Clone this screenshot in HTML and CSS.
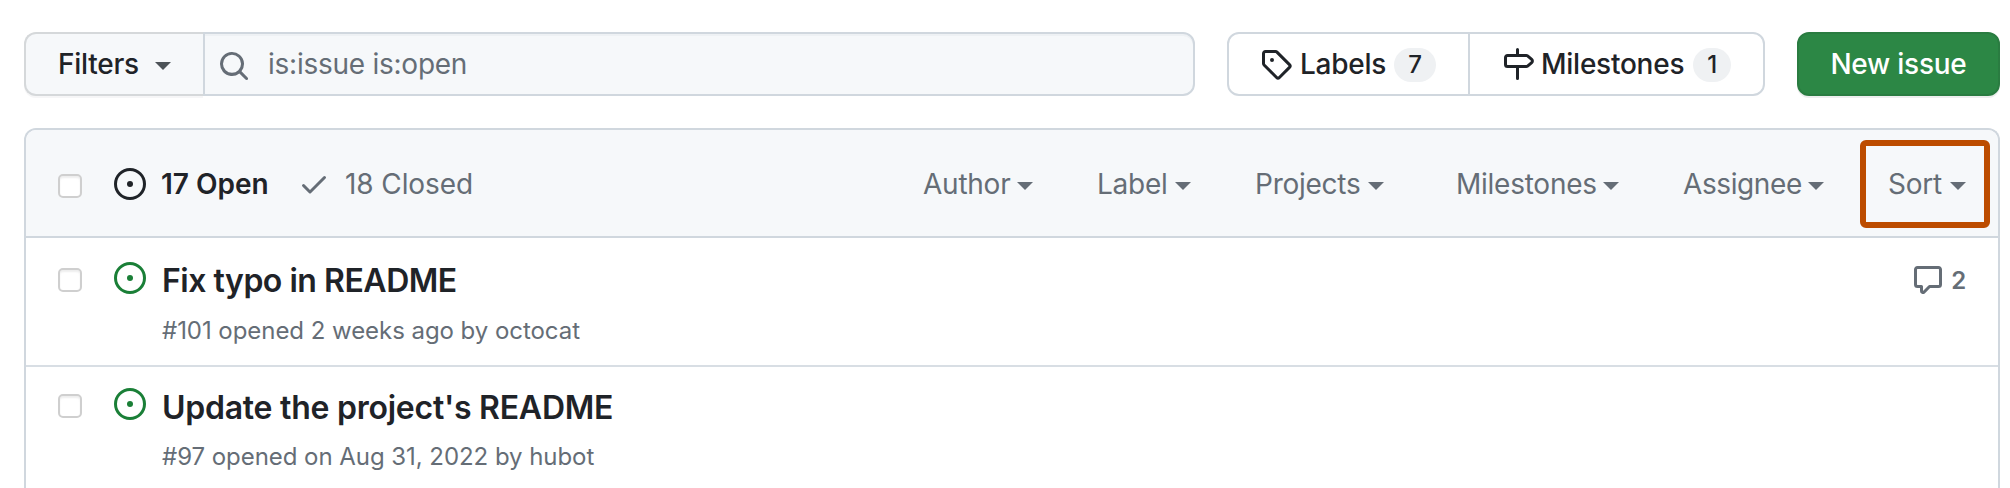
FILE: index.html
```html
<!DOCTYPE html>
<html lang="en">
<head>
<meta charset="utf-8">
<title>Issues</title>
<link rel="stylesheet" href="styles.css">
</head>
<body>
<svg class="sprite" aria-hidden="true">
  <symbol id="opened" viewBox="0 0 16 16"><path d="M8 9.5a1.5 1.5 0 1 0 0-3 1.5 1.5 0 0 0 0 3Z"/><path d="M8 0a8 8 0 1 1 0 16A8 8 0 0 1 8 0ZM1.5 8a6.5 6.5 0 1 0 13 0 6.5 6.5 0 0 0-13 0Z"/></symbol>
  <symbol id="check" viewBox="0 0 16 16"><path d="M13.78 4.22a.75.75 0 0 1 0 1.06l-7.25 7.25a.75.75 0 0 1-1.06 0L2.22 9.28a.751.751 0 0 1 .018-1.042.751.751 0 0 1 1.042-.018L6 10.94l6.72-6.72a.75.75 0 0 1 1.06 0Z"/></symbol>
  <symbol id="search" viewBox="0 0 16 16"><path d="M10.68 11.74a6 6 0 0 1-7.922-8.982 6 6 0 0 1 8.982 7.922l3.04 3.04a.749.749 0 0 1-.326 1.275.749.749 0 0 1-.734-.215ZM11.5 7a4.499 4.499 0 1 0-8.997 0A4.499 4.499 0 0 0 11.5 7Z"/></symbol>
  <symbol id="tag" viewBox="0 0 16 16"><path d="M1 7.775V2.75C1 1.784 1.784 1 2.75 1h5.025c.464 0 .91.184 1.238.513l6.25 6.25a1.75 1.75 0 0 1 0 2.474l-5.026 5.026a1.75 1.75 0 0 1-2.474 0l-6.25-6.25A1.752 1.752 0 0 1 1 7.775Zm1.5 0c0 .066.026.13.073.177l6.25 6.25a.25.25 0 0 0 .354 0l5.025-5.025a.25.25 0 0 0 0-.354l-6.25-6.25a.25.25 0 0 0-.177-.073H2.75a.25.25 0 0 0-.25.25ZM6 5a1 1 0 1 1 0 2 1 1 0 0 1 0-2Z"/></symbol>
  <symbol id="milestone" viewBox="0 0 16 16"><path d="M7.75 0a.75.75 0 0 1 .75.75V3h3.634c.414 0 .814.147 1.13.414l2.07 1.75a1.75 1.75 0 0 1 0 2.672l-2.07 1.75a1.75 1.75 0 0 1-1.13.414H8.5v5.25a.75.75 0 0 1-1.5 0V10H2.75A1.75 1.75 0 0 1 1 8.25v-3.5C1 3.784 1.784 3 2.75 3H7V.75A.75.75 0 0 1 7.75 0Zm4.384 8.5a.25.25 0 0 0 .161-.06l2.07-1.75a.248.248 0 0 0 0-.38l-2.07-1.75a.25.25 0 0 0-.161-.06H2.75a.25.25 0 0 0-.25.25v3.5c0 .138.112.25.25.25Z"/></symbol>
  <symbol id="comment" viewBox="0 0 16 16"><path d="M1 2.75C1 1.784 1.784 1 2.75 1h10.5c.966 0 1.75.784 1.75 1.75v7.5A1.75 1.75 0 0 1 13.25 12H9.06l-2.573 2.573A1.458 1.458 0 0 1 4 13.543V12H2.75A1.75 1.75 0 0 1 1 10.25Zm1.5 0v7.5c0 .138.112.25.25.25h2a.75.75 0 0 1 .75.75v2.19l2.72-2.72a.749.749 0 0 1 .53-.22h4.5a.25.25 0 0 0 .25-.25v-7.5a.25.25 0 0 0-.25-.25H2.75a.25.25 0 0 0-.25.25Z"/></symbol>
</svg>
<main class="page">
  <div class="toolbar">
    <button class="filters"><span class="filters-text">Filters</span><i class="caret"></i></button>
    <div class="search"><svg class="icon search-icon"><use href="#search"/></svg><span class="query">is:issue is:open</span></div>
    <nav class="subnav">
      <a class="subnav-item labels"><svg class="icon"><use href="#tag"/></svg><span class="labels-text">Labels</span><span class="counter counter-labels">7</span></a>
      <a class="subnav-item milestones"><svg class="icon"><use href="#milestone"/></svg><span class="milestones-text">Milestones</span><span class="counter counter-milestones">1</span></a>
    </nav>
    <button class="new-issue">New issue</button>
  </div>
  <section class="box">
    <header class="box-header">
      <span class="checkbox"></span>
      <svg class="icon state"><use href="#opened"/></svg>
      <span class="open-count">17 Open</span>
      <svg class="icon"><use href="#check"/></svg>
      <span class="closed-count">18 Closed</span>
      <div class="menus">
        <span class="menu author"><span>Author</span><i class="caret"></i></span>
        <span class="menu label"><span>Label</span><i class="caret"></i></span>
        <span class="menu projects"><span>Projects</span><i class="caret"></i></span>
        <span class="menu miles"><span>Milestones</span><i class="caret"></i></span>
        <span class="menu assignee"><span>Assignee</span><i class="caret"></i></span>
        <span class="menu sort"><span>Sort</span><i class="caret"></i></span>
      </div>
    </header>
    <article class="issue">
      <span class="checkbox"></span>
      <svg class="icon state"><use href="#opened"/></svg>
      <div class="issue-body">
        <h2 class="title title-fix">Fix typo in README</h2>
        <p class="meta">#101 opened 2 weeks ago by octocat</p>
      </div>
      <div class="comments"><svg class="icon"><use href="#comment"/></svg><span>2</span></div>
    </article>
    <article class="issue issue-last">
      <span class="checkbox"></span>
      <svg class="icon state"><use href="#opened"/></svg>
      <div class="issue-body">
        <h2 class="title title-update">Update the project's README</h2>
        <p class="meta">#97 opened on Aug 31, 2022 by hubot</p>
      </div>
    </article>
  </section>
</main>
</body>
</html>
```

FILE: styles.css
```css
* { box-sizing: border-box; }

body {
  margin: 0;
  background: #fff;
  color: #1f2328;
  font-family: Inter, "Liberation Sans", sans-serif;
  font-size: 28px;
  line-height: 40px;
  letter-spacing: -.25px;
  white-space: nowrap;
}

.sprite { display: none; }
.page { height: 488px; padding: 32px 10px 0 24px; }
.icon { width: 32px; height: 32px; flex: none; fill: currentColor; display: block; }

.caret {
  flex: none;
  border: 8px solid transparent;
  border-top-color: currentColor;
  border-bottom-width: 0;
}

.toolbar { display: flex; height: 64px; }
button { font: inherit; color: inherit; letter-spacing: inherit; }

.filters {
  display: flex;
  align-items: center;
  width: 179px;
  padding: 0 0 0 32px;
  border: 2px solid #d5d8da;
  border-right: 0;
  border-radius: 12px 0 0 12px;
  background: #f6f8fa;
  box-shadow: 0 2px 0 rgba(31, 35, 40, .04);
  font-weight: 500;
}
.filters-text { width: 97px; text-align: left; }
.filters .caret { color: #4d5358; margin-top: 4px; }

.search {
  display: flex;
  align-items: center;
  width: 992px;
  padding-left: 13px;
  border: 2px solid #d0d7de;
  border-radius: 0 12px 12px 0;
  background: #f6f8fa;
  box-shadow: inset 0 2px 0 rgba(208, 215, 222, .2);
  color: #656d76;
}
.search-icon { margin-top: 4px; }
.query { margin-left: 18px; }

.subnav {
  display: flex;
  width: 538px;
  margin-left: 32px;
  border: 2px solid #d0d7de;
  border-radius: 12px;
  font-weight: 500;
}
.subnav-item { display: flex; align-items: center; padding-left: 31px; }
.labels { width: 241px; border-right: 2px solid #d0d7de; }
.milestones { padding-left: 32px; }
.labels-text { width: 94px; margin-left: 8px; }
.milestones-text { width: 152px; margin-left: 7px; }
.counter {
  height: 34px;
  margin-top: 2px;
  border-radius: 17px;
  background: #eff1f3;
  font-size: 24px;
  line-height: 34px;
  text-align: center;
}
.counter-labels { width: 42px; }
.counter-milestones { width: 38px; }

.new-issue {
  width: 203px;
  margin-left: 32px;
  padding: 0;
  border: 2px solid #2a7c41;
  border-radius: 12px;
  background: #2c8745;
  box-shadow: 0 2px 0 rgba(31, 35, 40, .08);
  color: #fff;
  font-weight: 500;
}

.box {
  height: 360px;
  margin-top: 32px;
  width: 1976px;
  border: 2px solid #d0d7de;
  border-bottom: 0;
  border-radius: 12px 12px 0 0;
}
.box-header {
  display: flex;
  align-items: center;
  height: 108px;
  padding: 2px 0 0 32px;
  border-bottom: 2px solid #d0d7de;
  border-radius: 10px 10px 0 0;
  background: #f6f8fa;
  color: #656d76;
}
.checkbox {
  flex: none;
  width: 24px;
  height: 24px;
  border: 2px solid #cfcfcf;
  border-radius: 5px;
  background: #fff;
  box-shadow: inset 0 2px 2px rgba(0, 0, 0, .07);
}
.box-header .checkbox { margin-top: 4px; }
.state { margin-left: 32px; }
.box-header .state { color: #1f2328; }
.open-count { width: 137px; margin-left: 15px; color: #1f2328; font-weight: 600; letter-spacing: 0; }
.closed-count { margin-left: 15px; letter-spacing: -.1px; }

.menus { display: flex; align-items: center; margin-left: auto; padding-right: 8px; }
.menu { display: flex; align-items: center; justify-content: space-between; }
.menu .caret { margin-top: 4px; }
.author { width: 110px; margin-right: 64px; }
.label { width: 94px; margin-right: 64px; }
.projects { width: 129px; margin-right: 72px; }
.miles { width: 163px; margin-right: 64px; }
.assignee { width: 141px; margin-right: 36px; letter-spacing: -.4px; }
.sort {
  width: 130px;
  height: 88px;
  padding: 0 18px 0 22px;
  border: 6px solid #bc4c00;
  border-radius: 6px;
}

.issue {
  display: flex;
  align-items: flex-start;
  height: 129px;
  padding: 24px 32px 0;
  border-bottom: 2px solid #d8dee4;
}
.issue .checkbox { margin-top: 6px; }
.issue .state { color: #1a7f37; }
.issue-last { height: 121px; padding-top: 21px; border-bottom: 0; }
.issue-body { flex: 1; padding-left: 16px; }
.issue-last .issue-body { padding-top: 1px; }
.title { margin: 0; font-size: 32px; line-height: 38px; font-weight: 600; }
.title-fix { letter-spacing: -.48px; }
.title-update { letter-spacing: -.25px; }
.meta { margin: 16px 0 0; color: #656d76; font-size: 24px; line-height: 30px; letter-spacing: -.05px; }
.issue-last .meta { margin-top: 15px; }
.comments {
  display: flex;
  color: #656d76;
  font-size: 24px;
  line-height: 34px;
  font-weight: 600;
  gap: 7px;
  padding-top: 2px;
}
```
